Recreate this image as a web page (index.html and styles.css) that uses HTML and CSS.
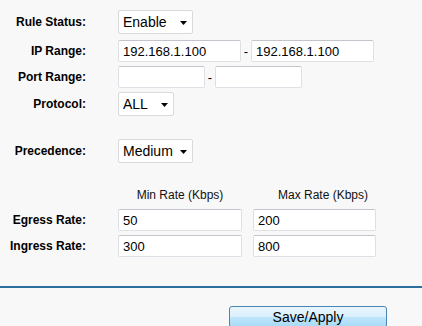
FILE: index.html
```html
<!DOCTYPE html>
<html lang="en">
<head>
    <meta charset="UTF-8">
    <meta name="viewport" content="width=device-width, initial-scale=1.0">
    <title>QoS Rule</title>
    <link rel="stylesheet" href="styles.css">
</head>
<body>
    <form class="rule-form">
        <div class="row">
            <label class="label">Rule Status:</label>
            <span class="select-wrap w-wide">
                <select class="select"><option>Enable</option><option>Disable</option></select>
                <svg class="arrow" width="7" height="4" viewBox="0 0 7 4"><polygon points="0,0 7,0 3.5,4"/></svg>
            </span>
        </div>
        <div class="row gap-sm">
            <label class="label">IP Range:</label>
            <input class="field w-ip" type="text" value="192.168.1.100">
            <span class="dash">-</span>
            <input class="field w-ip" type="text" value="192.168.1.100">
        </div>
        <div class="row gap-xs">
            <label class="label">Port Range:</label>
            <input class="field w-port" type="text" value="">
            <span class="dash">-</span>
            <input class="field w-port" type="text" value="">
        </div>
        <div class="row gap-xs">
            <label class="label">Protocol:</label>
            <span class="select-wrap w-narrow">
                <select class="select"><option>ALL</option><option>TCP</option><option>UDP</option></select>
                <svg class="arrow" width="7" height="4" viewBox="0 0 7 4"><polygon points="0,0 7,0 3.5,4"/></svg>
            </span>
        </div>
        <div class="row gap-lg">
            <label class="label">Precedence:</label>
            <span class="select-wrap w-wide">
                <select class="select"><option>Medium</option><option>High</option><option>Low</option></select>
                <svg class="arrow" width="7" height="4" viewBox="0 0 7 4"><polygon points="0,0 7,0 3.5,4"/></svg>
            </span>
        </div>

        <div class="rate-head">
            <span class="rate-col min-col">Min Rate (Kbps)</span>
            <span class="rate-col max-col">Max Rate (Kbps)</span>
        </div>
        <div class="row gap-md">
            <label class="label">Egress Rate:</label>
            <input class="field w-min" type="text" value="50">
            <input class="field w-max" type="text" value="200">
        </div>
        <div class="row gap-xs">
            <label class="label">Ingress Rate:</label>
            <input class="field w-min" type="text" value="300">
            <input class="field w-max" type="text" value="800">
        </div>
    </form>

    <div class="divider"></div>

    <div class="actions">
        <button type="button" class="save-btn">Save/Apply</button>
    </div>
</body>
</html>
```

FILE: styles.css
```css
body {
    margin: 0;
    padding: 0;
    font-family: "Liberation Sans", Arial, sans-serif;
    background-color: #f8f8f8;
    color: #000;
}

.rule-form {
    padding-top: 10px;
}

.row {
    display: flex;
    align-items: center;
}

.gap-xs {
    margin-top: 4px;
}

.gap-sm {
    margin-top: 6px;
}

.gap-md {
    margin-top: 7px;
}

.gap-lg {
    margin-top: 23px;
}

.label {
    width: 86px;
    margin-right: 32px;
    text-align: right;
    font-size: 12px;
    font-weight: bold;
    line-height: 14px;
}

/* selects */
.select-wrap {
    position: relative;
    display: inline-block;
    height: 24px;
}

.w-wide {
    width: 75px;
}

.w-narrow {
    width: 56px;
}

.select {
    appearance: none;
    -webkit-appearance: none;
    width: 100%;
    height: 24px;
    box-sizing: border-box;
    margin: 0;
    padding: 0 0 0 4px;
    border: 1px solid #d9d9de;
    border-radius: 2px;
    background-color: #fff;
    font-family: "Liberation Sans", Arial, sans-serif;
    font-size: 14px;
    color: #000;
    outline: none;
}

.arrow {
    position: absolute;
    right: 6px;
    top: 11px;
    fill: #000;
    pointer-events: none;
}

/* text fields */
.field {
    height: 22px;
    box-sizing: border-box;
    margin: 0;
    padding: 0 4px;
    border: 1px solid #dfe0e6;
    border-top-color: #c4c5cc;
    border-radius: 2px;
    background-color: #fff;
    font-family: "Liberation Sans", Arial, sans-serif;
    font-size: 13px;
    color: #000;
    outline: none;
}

.w-ip {
    width: 123px;
}

.w-port {
    width: 87px;
}

.w-min {
    width: 124px;
}

.w-max {
    width: 123px;
    margin-left: 11px;
}

.dash {
    width: 10px;
    text-align: center;
    font-size: 13px;
}

/* rate headings */
.rate-head {
    display: flex;
    padding-left: 118px;
    margin-top: 25px;
    font-size: 12px;
    line-height: 14px;
    color: #111;
}

.min-col {
    width: 124px;
    text-align: center;
}

.max-col {
    width: 140px;
    margin-left: 11px;
    text-align: center;
}

.divider {
    margin-top: 29px;
    height: 2px;
    background-color: #2a6f9e;
}

.actions {
    padding-left: 229px;
    margin-top: 18px;
}

.save-btn {
    width: 158px;
    height: 22px;
    padding: 0;
    border: 1px solid #4a86b4;
    border-radius: 3px;
    background: linear-gradient(to bottom, #eaf6fd 0%, #d9f0fc 50%, #bee6fd 51%, #a7d9f5 100%);
    font-family: "Liberation Sans", Arial, sans-serif;
    font-size: 14px;
    color: #000;
    cursor: pointer;
}
```
